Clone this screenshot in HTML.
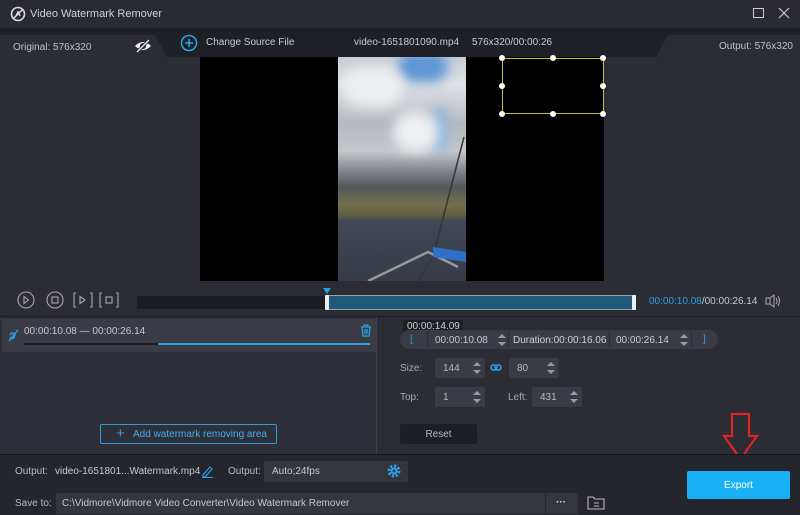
<!DOCTYPE html>
<html><head><meta charset="utf-8"><style>
*{margin:0;padding:0;box-sizing:border-box}
body{width:800px;height:515px;overflow:hidden;background:#2b2c34;font-family:"Liberation Sans",sans-serif;font-size:10px;color:#c8c9cf;position:relative}
.a{position:absolute}
.box{position:absolute;background:#3a3b44;border-radius:2px;color:#b8b9c0;font-size:10px;line-height:20px;padding-left:8px}
.sp{position:absolute;right:4px;top:4px;width:8px;height:12px}
.sp:before{content:"";position:absolute;left:0;top:0;border:4px solid transparent;border-bottom:4px solid #9a9ba2;border-top:0}
.sp:after{content:"";position:absolute;left:0;bottom:0;border:4px solid transparent;border-top:4px solid #9a9ba2;border-bottom:0}
.bl{filter:blur(6px)}
</style></head><body>
<div class="a" style="left:0;top:0;width:800px;height:28px;background:#2a2b32"></div>
<svg class="a" style="left:10px;top:6px" width="16" height="16" viewBox="0 0 16 16"><circle cx="8" cy="8" r="6.5" fill="none" stroke="#ddd" stroke-width="1.6"/><path d="M3 13L13 3M6 10l2-4 2 4" stroke="#ddd" stroke-width="1.5" fill="none"/></svg>
<div class="a" style="left:30px;top:8px;font-size:11px;color:#d0d1d6">Video Watermark Remover</div>
<div class="a" style="left:753px;top:8px;width:11px;height:10px;border:1px solid #ccc"></div>
<svg class="a" style="left:778px;top:7px" width="12" height="12"><path d="M1 1L11 11M11 1L1 11" stroke="#ccc" stroke-width="1.2"/></svg>
<div class="a" style="left:0;top:28px;width:800px;height:29px;background:#1f2026"></div>
<svg class="a" style="left:0;top:28px" width="800" height="29"><path d="M0 7H155L167 29H0Z" fill="#2b2c34"/><path d="M800 7H668L656 29H800Z" fill="#2b2c34"/></svg>
<div class="a" style="left:13px;top:42px;color:#c0c1c8">Original: 576x320</div>
<svg class="a" style="left:133px;top:38px" width="20" height="16" viewBox="0 0 20 16"><path d="M2 8Q10 0 18 8Q10 16 2 8Z" fill="#eee"/><circle cx="10" cy="8" r="3" fill="#1f2026"/><path d="M4 14L16 2" stroke="#1f2026" stroke-width="3"/><path d="M4 14L16 2" stroke="#eee" stroke-width="1.3"/></svg>
<svg class="a" style="left:180px;top:34px" width="18" height="18"><circle cx="9" cy="9" r="7.5" fill="none" stroke="#29a8e8" stroke-width="1.5"/><path d="M9 5v8M5 9h8" stroke="#29a8e8" stroke-width="1.6"/></svg>
<div class="a" style="left:206px;top:37px;color:#c8c9cf">Change Source File</div>
<div class="a" style="left:354px;top:37px;color:#c8c9cf">video-1651801090.mp4</div>
<div class="a" style="left:472px;top:37px;color:#c8c9cf">576x320/00:00:26</div>
<div class="a" style="left:719px;top:41px;color:#c0c1c8">Output: 576x320</div>
<div class="a" style="left:200px;top:57px;width:404px;height:224px;background:#000"></div>
<div class="a" style="left:338px;top:57px;width:128px;height:224px;background:linear-gradient(#c8ccd3 0%,#e0e2e6 12%,#b5b9c0 30%,#c4c7cc 42%,#7a7e84 52%,#54585a 58%,#72704c 66%,#5e5d40 71%,#414856 73%,#363b47 100%);overflow:hidden">
<div class="a bl" style="left:60px;top:-5px;width:50px;height:30px;background:#5d95d6;border-radius:20px"></div>
<div class="a bl" style="left:95px;top:50px;width:14px;height:45px;background:#8ab8e4;border-radius:10px"></div>
<div class="a bl" style="left:5px;top:10px;width:60px;height:40px;background:#eceef0;border-radius:30px"></div>
<div class="a bl" style="left:55px;top:55px;width:45px;height:40px;background:#eef0f2;border-radius:25px"></div>
<svg class="a" style="left:0;top:0" width="128" height="224"><path d="M126 80L95 200L80 224" stroke="#3a3430" stroke-width="1.5" fill="none"/><path d="M30 224L90 195L120 210" stroke="#999" stroke-width="2.5" fill="none"/><path d="M95 190L128 195V205L95 200Z" fill="#2f6fc8"/></svg>
</div>
<div class="a" style="left:502px;top:58px;width:102px;height:56px;border:1px solid #c8c02a"></div>
<div class="a" style="left:499px;top:55px;width:6px;height:6px;background:#fff;border-radius:50%"></div>
<div class="a" style="left:550px;top:55px;width:6px;height:6px;background:#fff;border-radius:50%"></div>
<div class="a" style="left:600px;top:55px;width:6px;height:6px;background:#fff;border-radius:50%"></div>
<div class="a" style="left:499px;top:83px;width:6px;height:6px;background:#fff;border-radius:50%"></div>
<div class="a" style="left:600px;top:83px;width:6px;height:6px;background:#fff;border-radius:50%"></div>
<div class="a" style="left:499px;top:111px;width:6px;height:6px;background:#fff;border-radius:50%"></div>
<div class="a" style="left:550px;top:111px;width:6px;height:6px;background:#fff;border-radius:50%"></div>
<div class="a" style="left:600px;top:111px;width:6px;height:6px;background:#fff;border-radius:50%"></div>
<svg class="a" style="left:16px;top:291px" width="104" height="18" fill="none" stroke="#aaa" stroke-width="1.1"><circle cx="10" cy="9" r="8"/><path d="M8 5.5L12.5 9L8 12.5Z"/><circle cx="39" cy="9" r="8"/><rect x="36" y="6" width="6" height="6"/><path d="M60 2h-2v14h2M74 2h2v14h-2M64 5.5L69 9L64 12.5Z"/><path d="M86 2h-2v14h2M100 2h2v14h-2"/><rect x="90" y="6" width="6" height="6"/></svg>
<div class="a" style="left:137px;top:296px;width:499px;height:13px;background:#1c1d22"></div>
<div class="a" style="left:327px;top:295px;width:309px;height:15px;background:#1f5879;border:1px solid #9aa0a8"></div>
<div class="a" style="left:325px;top:295px;width:4px;height:15px;background:#eee;border-radius:1px"></div>
<div class="a" style="left:632px;top:295px;width:4px;height:15px;background:#eee;border-radius:1px"></div>
<div class="a" style="left:323px;top:288px;border:4px solid transparent;border-top:6px solid #2a9ee0"></div>
<div class="a" style="left:649px;top:296px;font-size:10px"><span style="color:#2aa0e8">00:00:10.08</span>/00:00:26.14</div>
<svg class="a" style="left:765px;top:294px" width="16" height="14" fill="none" stroke="#aaa"><rect x="1" y="4" width="4" height="6"/><path d="M5 4L9 1V13L5 10M11 4Q13 7 11 10M13 2Q16 7 13 12"/></svg>
<div class="a" style="left:0;top:316px;width:800px;height:1px;background:#1e1f24"></div>
<div class="a" style="left:0;top:317px;width:376px;height:138px;background:#2e2f38"></div>
<div class="a" style="left:376px;top:317px;width:1px;height:138px;background:#3d3e47"></div>
<div class="a" style="left:2px;top:319px;width:374px;height:33px;background:#3a3b45"></div>
<svg class="a" style="left:6px;top:327px" width="14" height="16" fill="none" stroke="#2aa0e8" stroke-width="1.4"><path d="M3 14L12 3M4 8Q7 4 9 8Q7 14 4 10"/></svg>
<div class="a" style="left:24px;top:326px;color:#c8c9cf">00:00:10.08 — 00:00:26.14</div>
<svg class="a" style="left:360px;top:324px" width="12" height="13" fill="none" stroke="#2aa0e8" stroke-width="1.3"><path d="M1 3h10M4 3V1h4v2M2 3l1 9h6l1-9M5 5v5M7 5v5"/></svg>
<div class="a" style="left:24px;top:343px;width:134px;height:2px;background:#1a1b20"></div>
<div class="a" style="left:158px;top:343px;width:212px;height:2px;background:#2aa0e8"></div>
<div class="a" style="left:100px;top:424px;width:177px;height:20px;border:1px solid #2a9ed8;border-radius:2px"></div>
<div class="a" style="left:116px;top:427px;font-size:15px;color:#2aa0e8;line-height:14px">+</div>
<div class="a" style="left:133px;top:429px;color:#3fb0ee">Add watermark removing area</div>
<div class="a" style="left:403px;top:320px;width:60px;height:14px;background:#1d1e23;color:#d0d1d6;padding-left:4px;line-height:14px">00:00:14.09</div>
<div class="a" style="left:400px;top:330px;width:318px;height:19px;background:#3a3b45;border-radius:10px"></div>
<div class="a" style="left:410px;top:334px;color:#2aa0e8">[</div>
<div class="a" style="left:427px;top:331px;width:1px;height:17px;background:#2b2c34"></div>
<div class="a" style="left:435px;top:335px;color:#c8c9cf">00:00:10.08</div>
<div class="sp" style="left:498px;top:334px;right:auto"></div>
<div class="a" style="left:508px;top:331px;width:1px;height:17px;background:#2b2c34"></div>
<div class="a" style="left:513px;top:335px;color:#d0d1d6">Duration:00:00:16.06</div>
<div class="a" style="left:609px;top:331px;width:1px;height:17px;background:#2b2c34"></div>
<div class="a" style="left:616px;top:335px;color:#c8c9cf">00:00:26.14</div>
<div class="sp" style="left:680px;top:334px;right:auto"></div>
<div class="a" style="left:691px;top:331px;width:1px;height:17px;background:#2b2c34"></div>
<div class="a" style="left:703px;top:334px;color:#2aa0e8">]</div>
<div class="a" style="left:400px;top:363px;color:#a8a9b0">Size:</div>
<div class="box" style="left:435px;top:358px;width:50px;height:20px;line-height:21px">144<span class="sp"></span></div>
<svg class="a" style="left:490px;top:363px" width="12" height="10" fill="none" stroke="#2aa0e8" stroke-width="1.6"><rect x="1" y="2" width="6" height="5" rx="2.5"/><rect x="5" y="2" width="6" height="5" rx="2.5"/></svg>
<div class="box" style="left:509px;top:358px;width:50px;height:20px;line-height:21px">80<span class="sp"></span></div>
<div class="a" style="left:400px;top:392px;color:#a8a9b0">Top:</div>
<div class="box" style="left:435px;top:387px;width:50px;height:20px;line-height:21px">1<span class="sp"></span></div>
<div class="a" style="left:508px;top:392px;color:#a8a9b0">Left:</div>
<div class="box" style="left:532px;top:387px;width:50px;height:20px;line-height:21px">431<span class="sp"></span></div>
<div class="a" style="left:400px;top:424px;width:77px;height:20px;background:#1e1f25;border-radius:2px;color:#b8b9c0;text-align:center;line-height:22px">Reset</div>
<svg class="a" style="left:722px;top:412px" width="38" height="50"><path d="M10 2H27V24H35L18.5 47L2 24H10Z" fill="none" stroke="#e02424" stroke-width="2.2"/></svg>
<div class="a" style="left:0;top:454px;width:800px;height:61px;background:#25262d;border-top:1px solid #15161a"></div>
<div class="a" style="left:15px;top:466px;color:#b8b9c0">Output:</div>
<div class="a" style="left:55px;top:466px;color:#c8c9cf">video-1651801...Watermark.mp4</div>
<svg class="a" style="left:201px;top:465px" width="12" height="13" fill="none" stroke="#2aa0e8" stroke-width="1.2"><path d="M2 10L9 2l2 2-7 8H2ZM1 12.5h11"/></svg>
<div class="a" style="left:228px;top:466px;color:#b8b9c0">Output:</div>
<div class="box" style="left:264px;top:461px;width:144px;height:21px;background:#34353d;line-height:21px;color:#c8c9cf">Auto;24fps</div>
<svg class="a" style="left:387px;top:464px" width="14" height="14"><circle cx="7" cy="7" r="5" fill="none" stroke="#2aa0e8" stroke-width="3" stroke-dasharray="2.2 1.7"/><circle cx="7" cy="7" r="3.5" fill="#2aa0e8"/><circle cx="7" cy="7" r="1.5" fill="#34353d"/></svg>
<div class="a" style="left:15px;top:498px;color:#b8b9c0">Save to:</div>
<div class="box" style="left:56px;top:493px;width:522px;height:21px;background:#34353d;line-height:21px;color:#c8c9cf;padding-left:6px">C:\Vidmore\Vidmore Video Converter\Video Watermark Remover</div>
<div class="a" style="left:545px;top:493px;width:1px;height:21px;background:#25262d"></div>
<div class="a" style="left:556px;top:497px;color:#ddd;font-weight:bold">···</div>
<svg class="a" style="left:587px;top:494px" width="18" height="16" fill="none" stroke="#bbb" stroke-width="1.1"><path d="M1 3h5l2 2h9v10H1Z"/><path d="M7 9h5M7 12h5"/></svg>
<div class="a" style="left:687px;top:471px;width:103px;height:28px;background:#1ab0f5;border-radius:2px;color:#fff;text-align:center;line-height:29px">Export</div>
</body></html>
